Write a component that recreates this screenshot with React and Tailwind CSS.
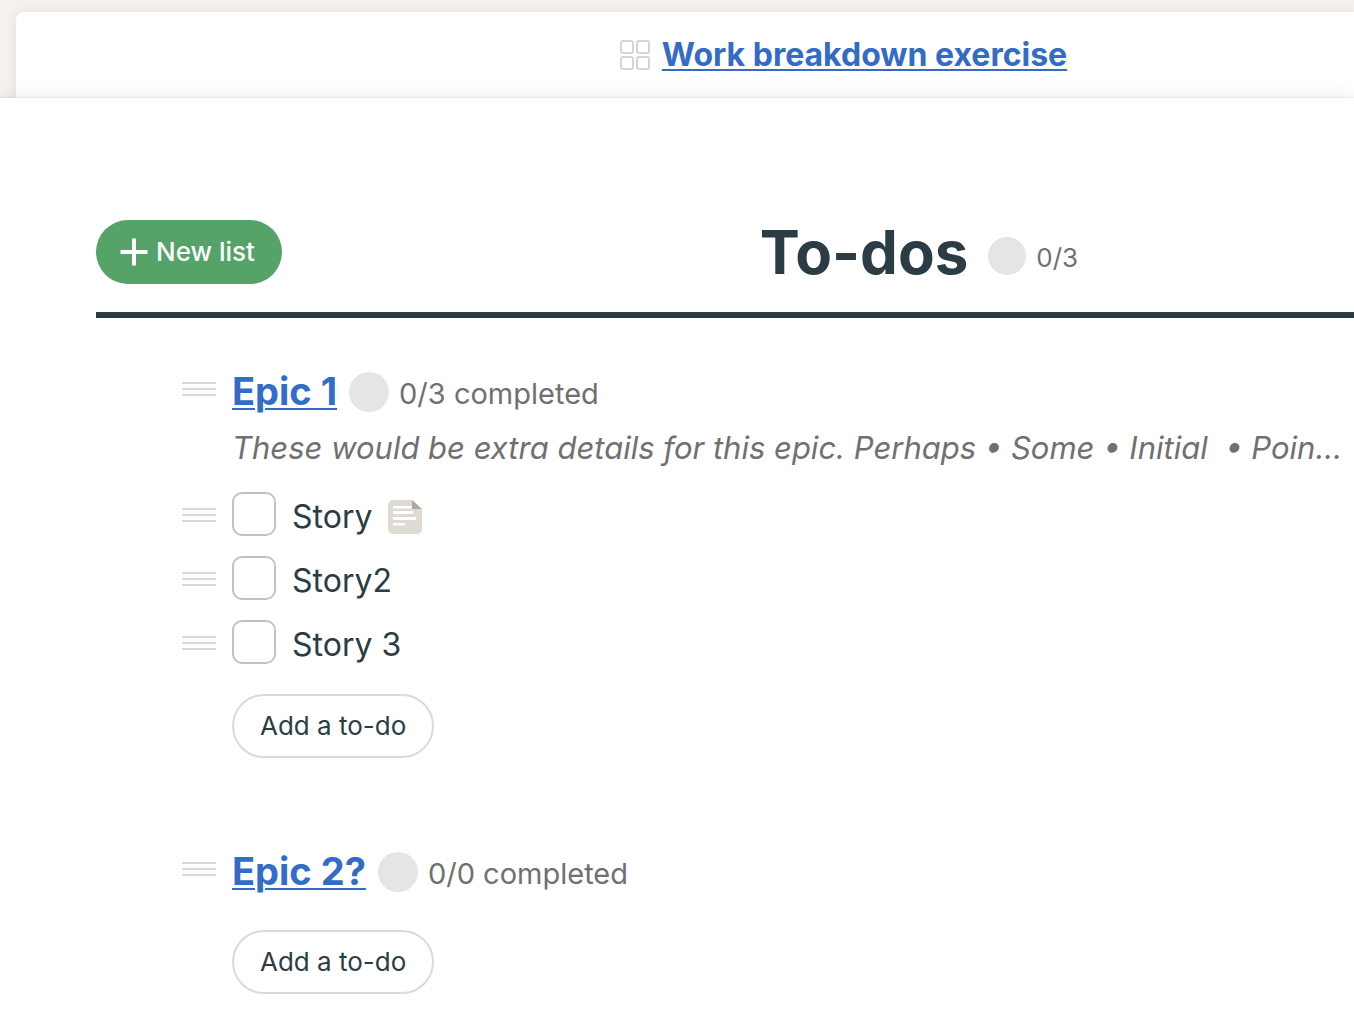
import React from "react";

const lists = [
  {
    id: "epic-1",
    title: "Epic 1",
    progress: "0/3 completed",
    details:
      "These would be extra details for this epic. Perhaps • Some • Initial \u00a0• Poin...",
    todos: [
      { id: "story-1", title: "Story", hasNotes: true },
      { id: "story-2", title: "Story2" },
      { id: "story-3", title: "Story 3" },
    ],
  },
  { id: "epic-2", title: "Epic 2?", progress: "0/0 completed", todos: [] },
];

function GridIcon() {
  return (
    <svg
      className="size-[30px] shrink-0"
      viewBox="0 0 30 30"
      fill="none"
      stroke="#d5d5d5"
      strokeWidth="2"
      aria-hidden="true"
    >
      <rect x="1" y="1" width="12" height="12" rx="2" />
      <rect x="17" y="1" width="12" height="12" rx="2" />
      <rect x="1" y="17" width="12" height="12" rx="2" />
      <rect x="17" y="17" width="12" height="12" rx="2" />
    </svg>
  );
}

function PlusIcon() {
  return (
    <svg className="size-7 shrink-0" viewBox="0 0 28 28" fill="#fff" aria-hidden="true">
      <path d="M12 .5h4V12h11.500v4H16v11.500h-4V16H.5v-4H12z" />
    </svg>
  );
}

function NoteIcon() {
  return (
    <svg className="size-[34px] shrink-0" viewBox="0 0 34 34" role="img" aria-label="Has notes">
      <path d="M5 0h19l10 9v20a5 5 0 0 1-5 5H5a5 5 0 0 1-5-5V5a5 5 0 0 1 5-5z" fill="#dfdbd4" />
      <path d="M24 0l10 9H24z" fill="#b0a797" />
      <path d="M5 6h19v2.500H5zM5 11h20v3H5zM5 17h23v3H5zM5 23h12v2.500H5z" fill="#fff" />
    </svg>
  );
}

function DragHandle({ label }) {
  return (
    <button
      type="button"
      aria-label={label}
      className="flex w-[34px] shrink-0 cursor-move flex-col gap-1"
    >
      <span className="h-0.5 w-full bg-[#dadada]" />
      <span className="h-0.5 w-full bg-[#dadada]" />
      <span className="h-0.5 w-full bg-[#dadada]" />
    </button>
  );
}

function Todo({ todo }) {
  return (
    <li className="flex h-16 items-center">
      <div className="pt-0.5">
        <DragHandle label={`Move ${todo.title}`} />
      </div>
      <input
        id={todo.id}
        type="checkbox"
        className="ml-4 size-11 shrink-0 appearance-none rounded-[10px] border-2 border-[#c2c2c2] bg-white checked:bg-[#55a369]"
      />
      <label htmlFor={todo.id} className="ml-4 pt-1.5 text-[32px] leading-10">
        {todo.title}
      </label>
      {todo.hasNotes && (
        <span className="ml-4 pt-1.5">
          <NoteIcon />
        </span>
      )}
    </li>
  );
}

function TodoList({ list }) {
  const hasTodos = list.todos.length > 0;
  return (
    <section>
      <div className="flex h-12 items-center">
        <div className="pb-1.5">
          <DragHandle label={`Move ${list.title}`} />
        </div>
        <h2 className="ml-4 pb-0.5 text-[38px] leading-12 font-bold">
          <a
            href={`#${list.id}`}
            className="text-[#326cc6] underline decoration-2 underline-offset-3"
          >
            {list.title}
          </a>
        </h2>
        <span className="ml-3 size-10 shrink-0 rounded-full bg-[#e5e5e5]" />
        <span className="ml-2.5 pt-1 text-[29px] leading-10 whitespace-nowrap text-[#707070]">
          {list.progress}
        </span>
      </div>
      {list.details && (
        <p className="ml-[50px] overflow-hidden pt-2 text-[31px] leading-12 whitespace-nowrap text-[#707070] italic">
          {list.details}
        </p>
      )}
      {hasTodos && (
        <ul className="pt-2.5 pb-4">
          {list.todos.map((todo) => (
            <Todo key={todo.id} todo={todo} />
          ))}
        </ul>
      )}
      <button
        type="button"
        className={`${hasTodos ? "mt-1" : "mt-[34px]"} ml-[50px] h-16 rounded-full border-2 border-[#dadada] bg-white px-[26px] text-[26px] leading-8`}
      >
        Add a to-do
      </button>
    </section>
  );
}

export default function App() {
  return (
    <div
      className="min-h-screen overflow-hidden bg-[#f5f1ee] pt-3 text-[#2c3c45]"
      style={{ fontFamily: 'Inter, "Liberation Sans", sans-serif' }}
    >
      <header className="ml-4 flex h-[86px] items-center justify-center gap-3 rounded-tl-lg bg-white pl-[317px] shadow-[0_0_12px_rgba(0,0,0,0.08)]">
        <GridIcon />
        <a
          href="#project"
          className="text-[32px] leading-10 font-bold whitespace-nowrap text-[#326cc6] underline decoration-2 underline-offset-3"
        >
          Work breakdown exercise
        </a>
      </header>

      <main className="relative min-h-[922px] bg-white pt-[122px] pl-24 shadow-[0_0_16px_rgba(0,0,0,0.1),0_0_2px_rgba(0,0,0,0.12)]">
        <div className="flex items-center border-b-6 border-[#2c3c45] pb-7">
          <button
            type="button"
            className="flex h-16 shrink-0 items-center gap-2 rounded-full bg-[#55a369] pr-[27px] pl-6 text-[26px] leading-8 font-medium whitespace-nowrap text-white"
          >
            <PlusIcon />
            New list
          </button>
          <div className="flex h-16 grow items-center justify-center pl-[202px]">
            <h1 className="text-[60px] leading-16 font-bold">To-dos</h1>
            <span className="mt-2 ml-5 size-[38px] shrink-0 rounded-full bg-[#e5e5e5]" />
            <span className="mt-3 ml-2.5 text-[26px] leading-8 text-[#707070]">0/3</span>
          </div>
        </div>

        <div className="flex flex-col gap-[90px] pt-[50px] pl-[86px]">
          {lists.map((list) => (
            <TodoList key={list.id} list={list} />
          ))}
        </div>
      </main>
    </div>
  );
}
